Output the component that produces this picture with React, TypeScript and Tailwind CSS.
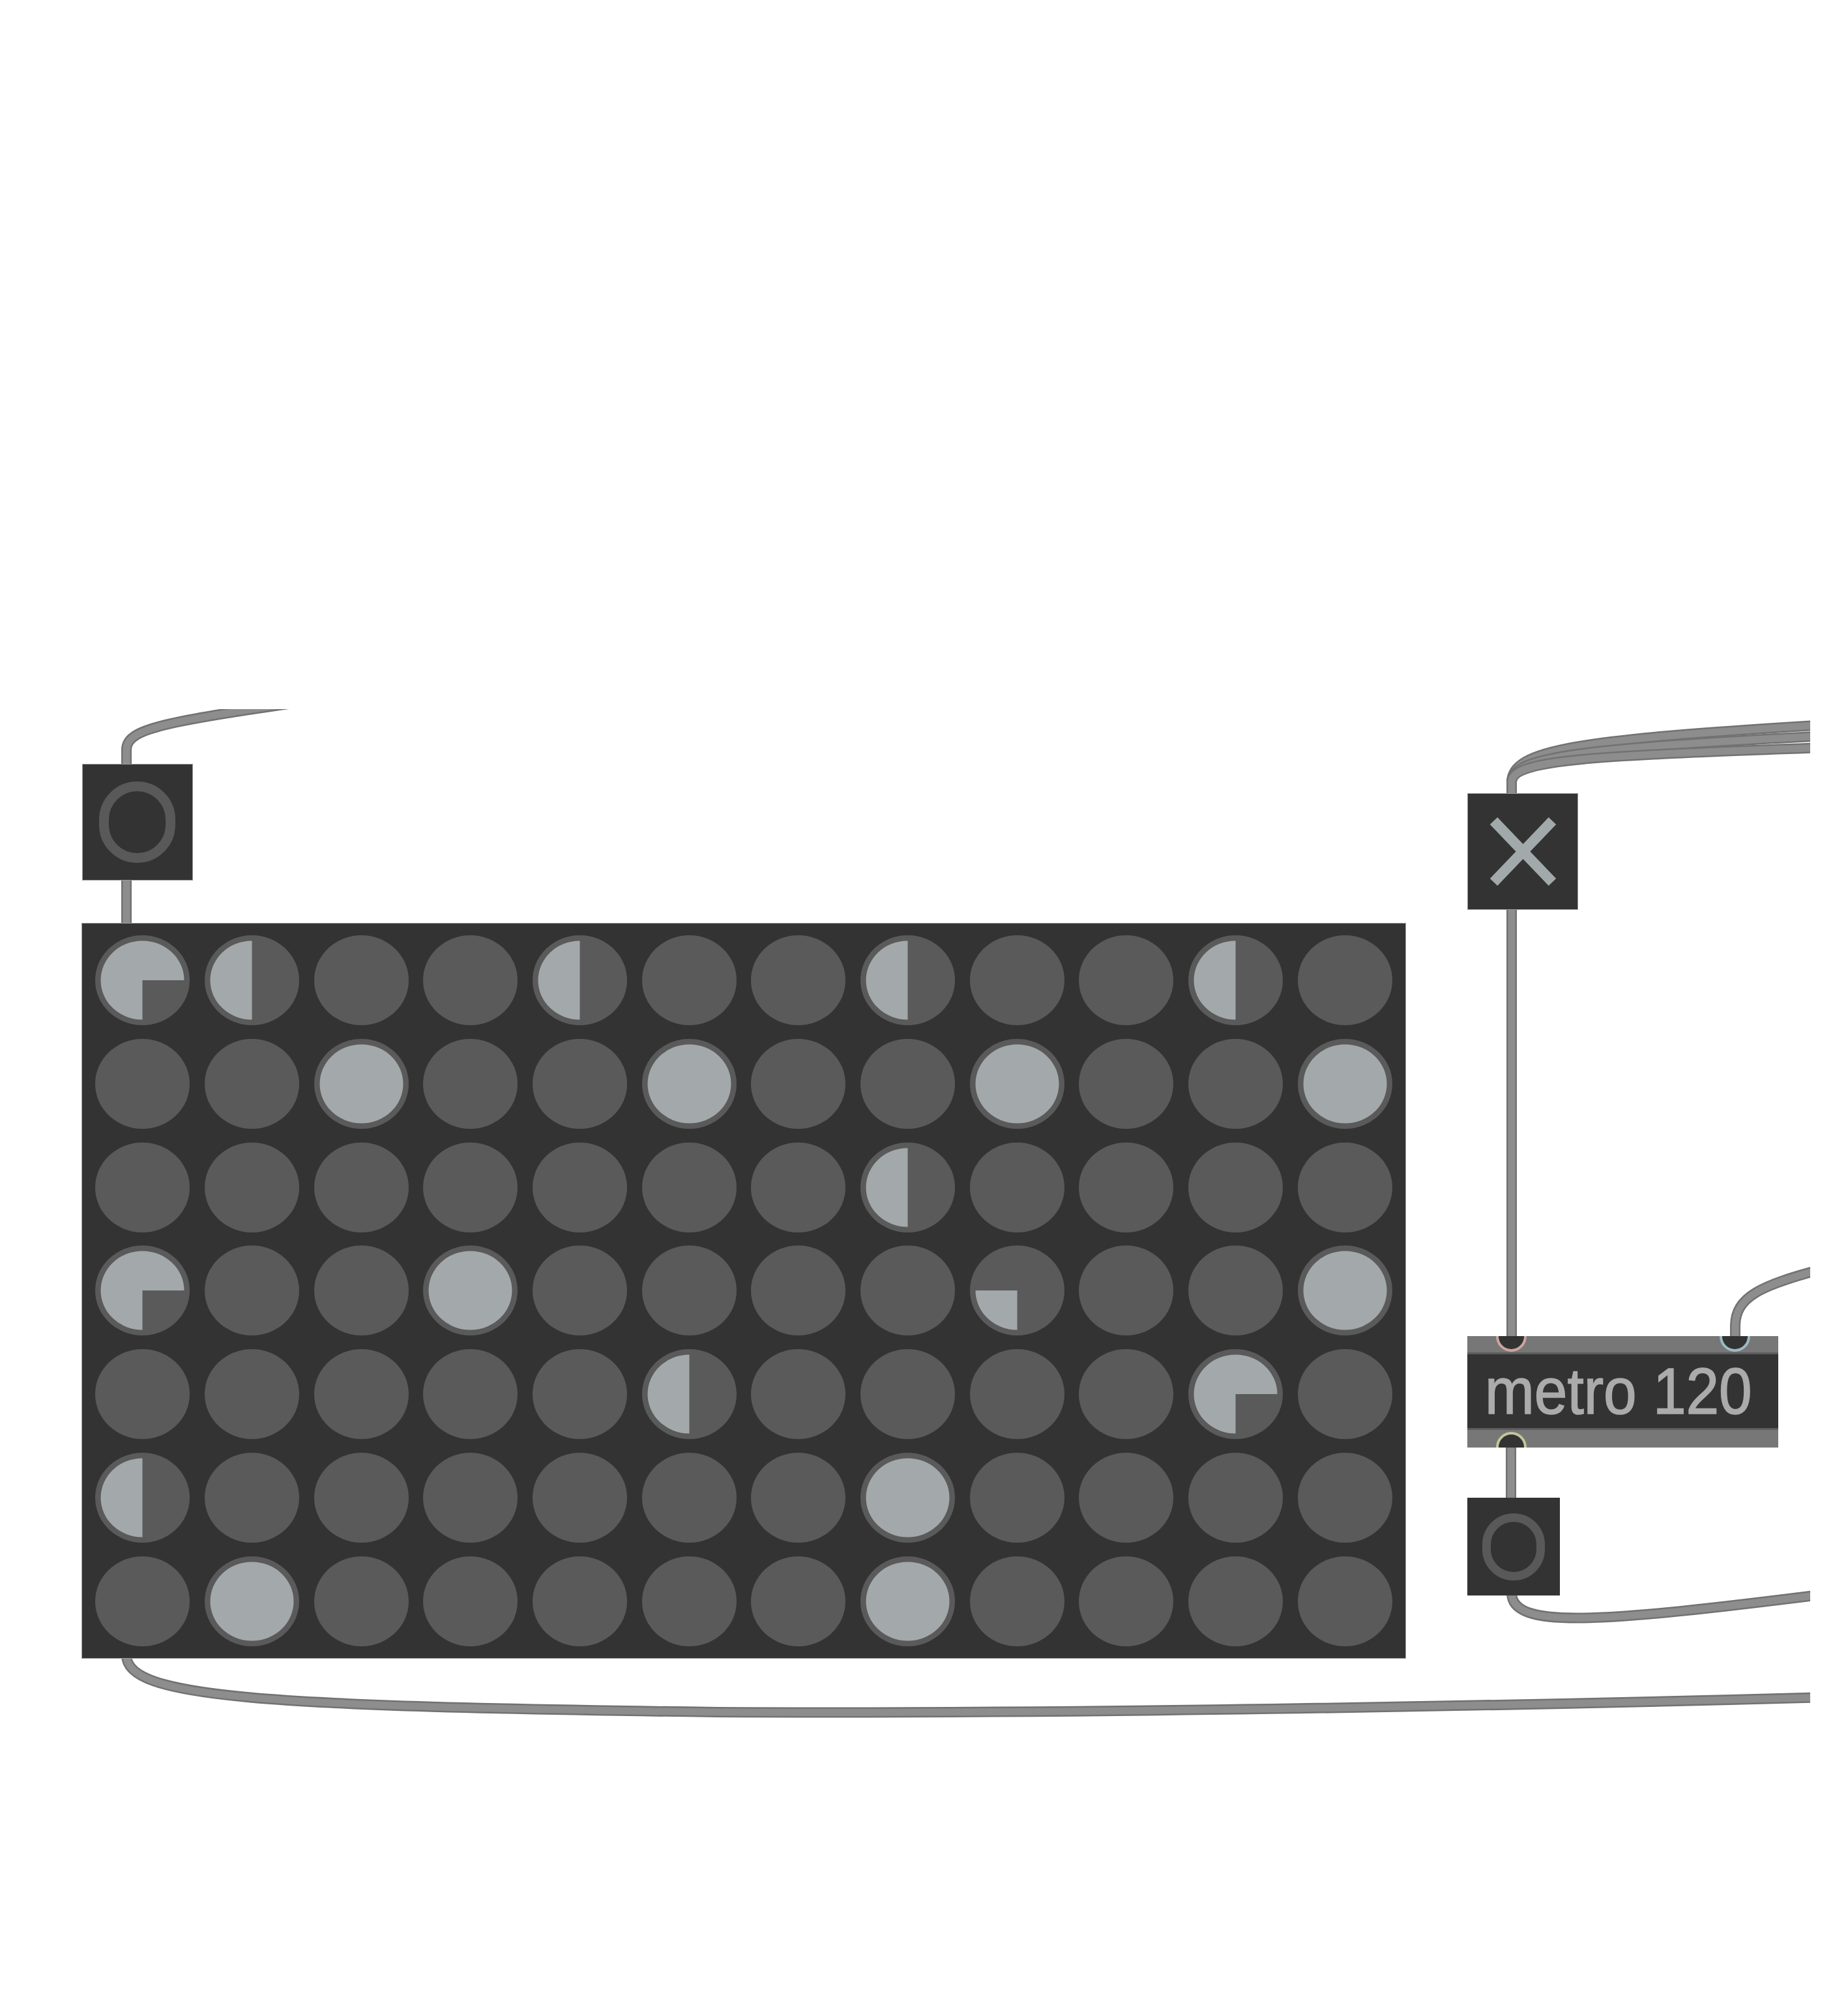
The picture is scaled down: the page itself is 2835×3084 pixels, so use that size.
import React from "react";

const TOP = 1088;

const CELLS: number[][] = [
  [3, 2, 0, 0, 2, 0, 0, 2, 0, 0, 2, 0],
  [0, 0, 4, 0, 0, 4, 0, 0, 4, 0, 0, 4],
  [0, 0, 0, 0, 0, 0, 0, 2, 0, 0, 0, 0],
  [3, 0, 0, 4, 0, 0, 0, 0, 1, 0, 0, 4],
  [0, 0, 0, 0, 0, 2, 0, 0, 0, 0, 3, 0],
  [2, 0, 0, 0, 0, 0, 0, 4, 0, 0, 0, 0],
  [0, 4, 0, 0, 0, 0, 0, 4, 0, 0, 0, 0],
];

function Cell({ v }: { v: number }) {
  const cx = 72.5;
  const cy = 69;
  const rx = 64;
  const ry = 60.5;
  let fill: React.ReactNode = null;
  if (v === 4) {
    fill = <ellipse cx={cx} cy={cy} rx={rx} ry={ry} fill="#a3a9aa" />;
  } else if (v === 1) {
    fill = (
      <path
        d={`M${cx},${cy} L${cx},${cy + ry} A${rx},${ry} 0 0 1 ${cx - rx},${cy} Z`}
        fill="#a3a9aa"
      />
    );
  } else if (v === 2) {
    fill = (
      <path
        d={`M${cx},${cy} L${cx},${cy + ry} A${rx},${ry} 0 0 1 ${cx - rx},${cy} A${rx},${ry} 0 0 1 ${cx},${cy - ry} Z`}
        fill="#a3a9aa"
      />
    );
  } else if (v === 3) {
    fill = (
      <path
        d={`M${cx},${cy} L${cx},${cy + ry} A${rx},${ry} 0 1 1 ${cx + rx},${cy} Z`}
        fill="#a3a9aa"
      />
    );
  }
  return (
    <div className="flex items-center justify-center">
      <svg width="145" height="138" viewBox="0 0 145 138">
        <ellipse cx={cx} cy={cy} rx={72.5} ry={69} fill="#5a5a5a" />
        {fill}
      </svg>
    </div>
  );
}

function Cord({ d }: { d: string }) {
  return (
    <g fill="none" strokeLinecap="butt">
      <path d={d} stroke="#727272" strokeWidth={16} />
      <path d={d} stroke="#8d8d8d" strokeWidth={11} />
    </g>
  );
}

export default function App() {
  return (
    <div className="w-[2835px] h-[3084px] bg-white overflow-hidden">
      <div className="relative mt-[1088px] w-[2777px] h-[1996px] overflow-hidden">
        <svg
          className="absolute left-0 top-0"
          width="2777"
          height="1996"
          viewBox={`0 ${TOP} 2777 1996`}
        >
          {/* bang1 top cord */}
          <Cord d="M194,1175 L194,1150 C194,1115 260,1105 600,1058" />
          {/* bang1 -> matrix */}
          <Cord d="M194,1345 L194,1420" />
          {/* toggle top cords bundle */}
          <Cord d="M2319,1220 L2319,1200 C2319,1150 2420,1135 2800,1112" />
          <Cord d="M2319,1220 L2319,1200 C2319,1160 2430,1148 2800,1129" />
          <Cord d="M2319,1220 L2319,1200 C2319,1165 2440,1160 2800,1147" />
          {/* toggle -> metro */}
          <Cord d="M2319,1390 L2319,2055" />
          {/* right inlet cord */}
          <Cord d="M2662,2056 L2662,2035 C2662,1990 2700,1972 2800,1946" />
          {/* metro -> bang2 */}
          <Cord d="M2318,2215 L2318,2302" />
          {/* bang2 bottom cord */}
          <Cord d="M2319,2444 C2319,2500 2450,2490 2800,2446" />
          {/* matrix bottom cord */}
          <Cord d="M194,2540 C194,2605 400,2618 1100,2627 C1600,2630 2300,2618 2800,2604" />
        </svg>

        <div className="relative flex items-start pt-[84px] pl-[125px]">
          {/* left column: bang + matrixctrl */}
          <div className="flex flex-col items-start gap-[65px]">
            <div className="ml-[1px] w-[170px] h-[179px] bg-[#333333] border border-[#9a9a9a] flex items-center justify-center">
              <div className="w-[117px] h-[125px] rounded-full border-[15px] border-[#595959] -ml-[2px]" />
            </div>
            <div className="w-[2032px] h-[1129px] bg-[#333333] border border-[#a0a0a0] px-[9px] py-[8px] grid grid-cols-12 grid-rows-7">
              {CELLS.flatMap((row, r) =>
                row.map((v, c) => <Cell key={`${r}-${c}`} v={v} />)
              )}
            </div>
          </div>

          {/* right column: toggle, metro, bang */}
          <div className="flex flex-col items-start ml-[94px] mt-[45px]">
            <div className="w-[170px] h-[179px] bg-[#333333] border border-[#9a9a9a] flex items-center justify-center">
              <svg width="170" height="179" viewBox="0 0 170 179">
                <path d="M40,42 L131,137 M131,42 L40,137" stroke="#a2a9aa" strokeWidth={16} />
              </svg>
            </div>

            <div className="relative mt-[654px] w-[477px] h-[171px] flex flex-col">
              <div className="h-[28px] bg-[#777777] border-b-[3px] border-[#5c5c5c]" />
              <div className="flex-1 bg-[#333333] flex items-center pl-[27px]">
                <span
                  className="text-[91px] leading-none text-[#ababab] scale-y-110 origin-center [-webkit-text-stroke:1.5px_#ababab]"
                  style={{ fontFamily: '"Liberation Sans", Arial, sans-serif' }}
                >
                  metro 120
                </span>
              </div>
              <div className="h-[30px] bg-[#777777] border-t-[3px] border-[#5c5c5c]" />
              <div className="absolute left-[44px] top-0 w-[47px] h-[24px] rounded-b-full bg-[#333333] border-[4px] border-t-0 border-[#c9a59e]" />
              <div className="absolute left-[387px] top-0 w-[47px] h-[24px] rounded-b-full bg-[#333333] border-[4px] border-t-0 border-[#9dbac4]" />
              <div className="absolute left-[44px] bottom-0 w-[47px] h-[24px] rounded-t-full bg-[#333333] border-[4px] border-b-0 border-[#c3c59b]" />
            </div>

            <div className="mt-[77px] w-[142px] h-[150px] bg-[#333333] flex items-center justify-center">
              <div className="w-[96px] h-[103px] rounded-full border-[13px] border-[#595959]" />
            </div>
          </div>
        </div>
      </div>
    </div>
  );
}
